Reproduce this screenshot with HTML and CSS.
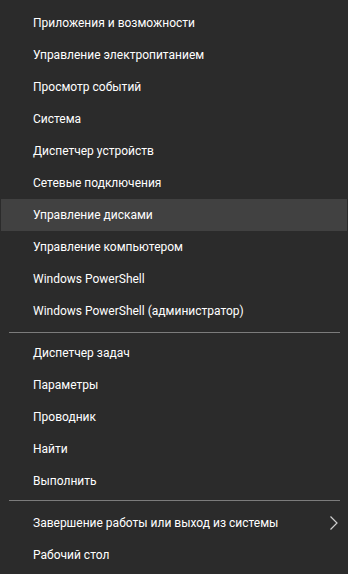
FILE: index.html
```html
<!DOCTYPE html>
<html>
  <head>
    <title>Win+X</title>
    <link rel="stylesheet" href="styles.css">
  </head>
  <body>
    <div class="menu">
      <div class="group">
        <div class="item">Приложения и возможности</div>
        <div class="item">Управление электропитанием</div>
        <div class="item">Просмотр событий</div>
        <div class="item">Система</div>
        <div class="item">Диспетчер устройств</div>
        <div class="item">Сетевые подключения</div>
        <div class="item active">Управление дисками</div>
        <div class="item">Управление компьютером</div>
        <div class="item">Windows PowerShell</div>
        <div class="item">Windows PowerShell (администратор)</div>
      </div>
      <div class="sep sep-first"></div>
      <div class="group">
        <div class="item">Диспетчер задач</div>
        <div class="item">Параметры</div>
        <div class="item">Проводник</div>
        <div class="item">Найти</div>
        <div class="item">Выполнить</div>
      </div>
      <div class="sep sep-second"></div>
      <div class="group">
        <div class="item">
          <span>Завершение работы или выход из системы</span>
          <svg class="chevron" width="10" height="16" viewBox="0 0 10 16">
            <path d="M1.5 1.5 L8 8 L1.5 14.5" fill="none" stroke="#cfcfcf" stroke-width="1.2"/>
          </svg>
        </div>
        <div class="item">Рабочий стол</div>
      </div>
    </div>
  </body>
</html>
```

FILE: styles.css
```css
html, body {
  margin: 0;
  padding: 0;
  background-color: #2b2b2b;
}

body {
  font-family: Roboto, "Noto Sans", sans-serif;
  font-size: 12px;
  color: #ffffff;
}

.menu {
  padding-top: 7px;
}

.item {
  height: 32px;
  margin: 0 1px;
  padding-left: 32px;
  padding-right: 8px;
  display: flex;
  align-items: center;
  justify-content: space-between;
  white-space: nowrap;
}

.item.active {
  background-color: #414141;
}

.chevron {
  display: block;
}

.sep {
  height: 1px;
  background-color: #7c7c7c;
  margin-left: 9px;
  margin-right: 8px;
}

.sep-first {
  margin-top: 5px;
  margin-bottom: 4px;
}

.sep-second {
  margin-top: 3px;
  margin-bottom: 6px;
}
```
